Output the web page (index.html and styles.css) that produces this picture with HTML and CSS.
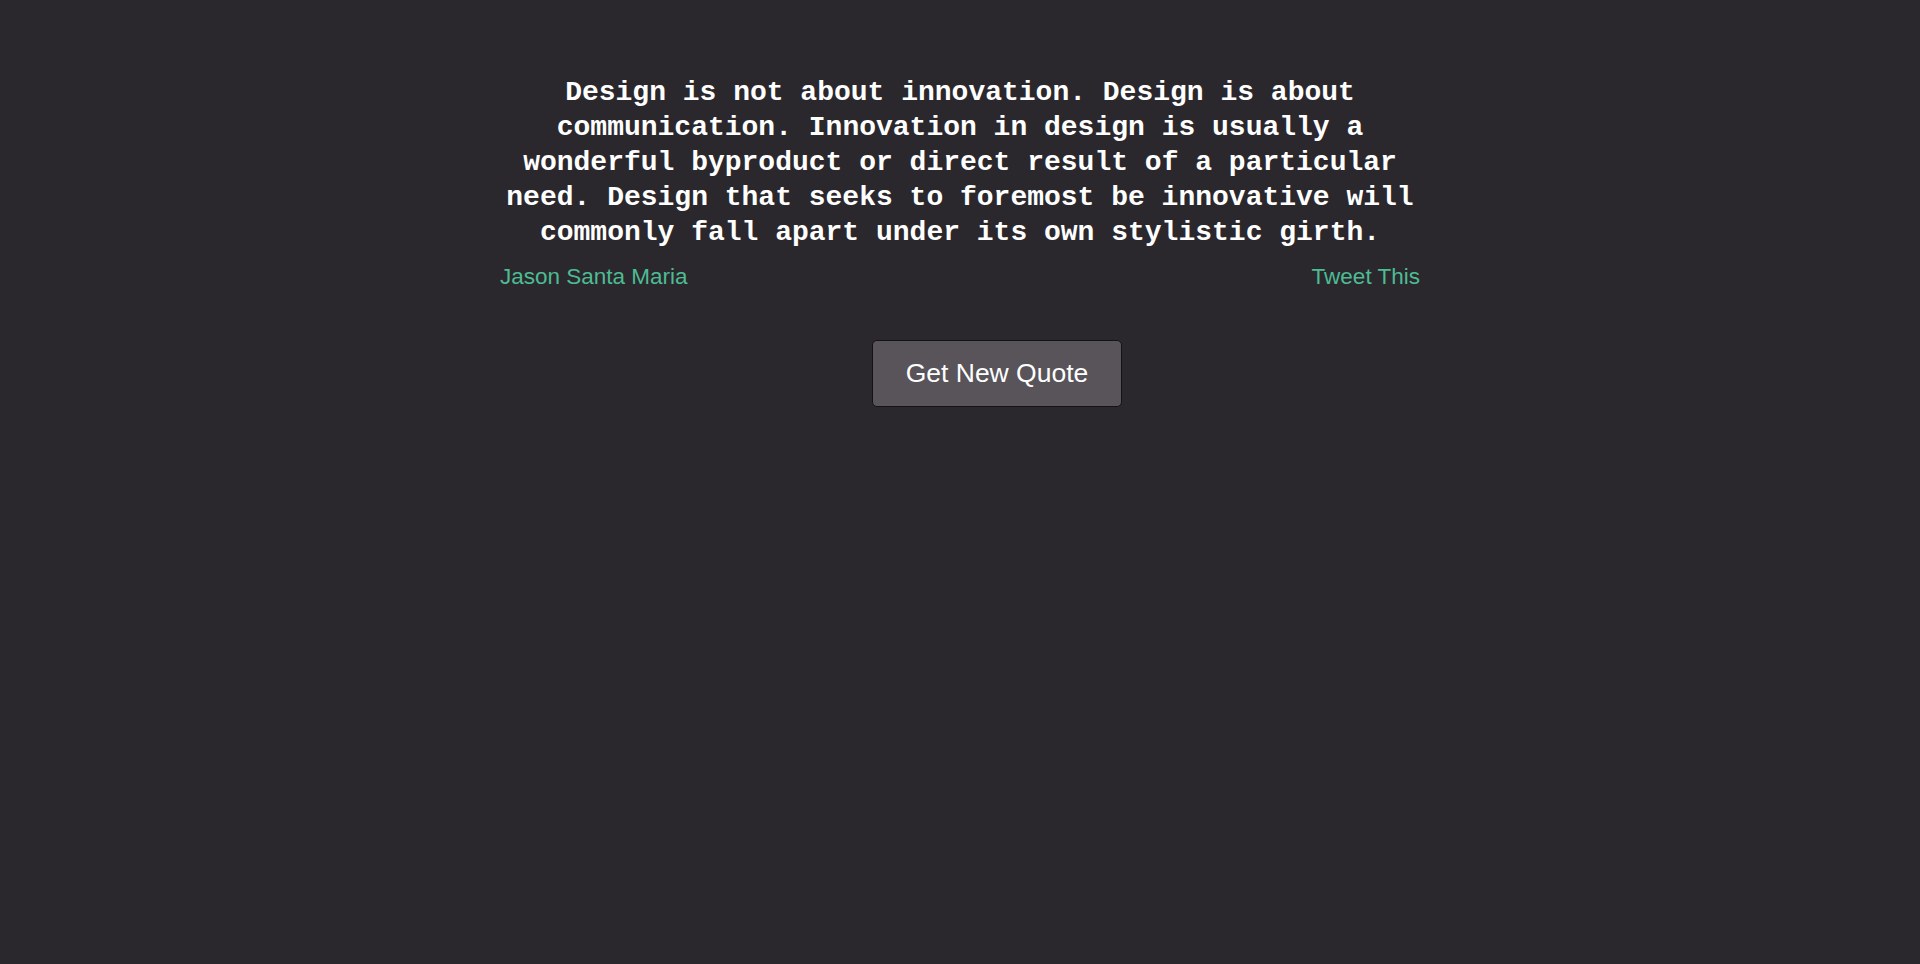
FILE: index.html
```html
<!DOCTYPE html>
<html lang="en">
<head>
<meta charset="utf-8">
<title>Random Quote Machine</title>
<link rel="stylesheet" href="styles.css">
</head>
<body>
<main class="page">
  <section class="quote-box">
    <blockquote class="quote-text">Design is not about innovation. Design is about communication. Innovation in design is usually a wonderful byproduct or direct result of a particular need. Design that seeks to foremost be innovative will commonly fall apart under its own stylistic girth.</blockquote>
    <div class="quote-meta">
      <a class="author" href="#">Jason Santa Maria</a>
      <a class="tweet" href="#">Tweet This</a>
    </div>
  </section>
  <div class="actions">
    <button class="new-quote" type="button">Get New Quote</button>
  </div>
</main>
</body>
</html>
```
FILE: styles.css
```css
html, body {
  margin: 0;
  padding: 0;
  background: #2b282d;
  height: 100%;
}
body {
  font-family: "Liberation Sans", Arial, sans-serif;
  color: #fff;
}
.page {
  padding-top: 75px;
  display: flex;
  flex-direction: column;
  align-items: center;
}
.quote-box {
  width: 920px;
}
.quote-text {
  margin: 0;
  font-family: "Liberation Mono", "Courier New", monospace;
  font-weight: bold;
  font-size: 28px;
  line-height: 35px;
  text-align: center;
  color: #ffffff;
}
.quote-meta {
  display: flex;
  justify-content: space-between;
  margin-top: 14px;
  font-size: 22.5px;
  line-height: 25px;
}
.author, .tweet {
  color: #4dbb93;
  text-decoration: none;
}
.actions {
  margin-top: 51px;
  display: flex;
  justify-content: center;
  width: 920px;
}
.new-quote {
  margin-left: 74px;
  width: 250px;
  height: 67px;
  background: #58545a;
  border: 1px solid #141215;
  border-radius: 5px;
  color: #ffffff;
  font-family: "Liberation Sans", Arial, sans-serif;
  font-size: 26.5px;
  padding: 0;
  cursor: pointer;
}
```
